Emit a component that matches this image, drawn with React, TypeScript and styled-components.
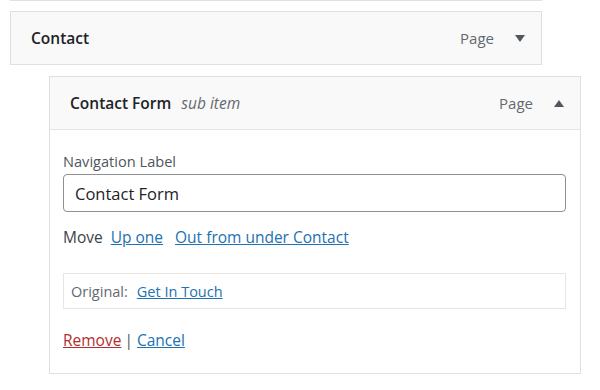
import styled, { createGlobalStyle } from "styled-components";

const GlobalStyle = createGlobalStyle`
	html, body {
		margin: 0;
		padding: 0;
		background: #ffffff;
	}
	body {
		font-family: "Open Sans", "Noto Sans", sans-serif;
		color: #1d2327;
		font-size: 15px;
	}
`;

type Caret = "up" | "down";

function Arrow({ dir }: { dir: Caret }) {
	return (
		<ArrowIcon viewBox="0 0 10 7" aria-hidden="true">
			{dir === "down" ? <path d="M0 0h10L5 7z" /> : <path d="M0 7h10L5 0z" />}
		</ArrowIcon>
	);
}

export default function App() {
	return (
		<>
			<GlobalStyle />
			<MenuList>
				<PrevEdge />
				<MenuItem $depth={0}>
					<ItemBar>
						<ItemTitle>Contact</ItemTitle>
						<ItemControls>
							<ItemType>Page</ItemType>
							<Arrow dir="down" />
						</ItemControls>
					</ItemBar>
				</MenuItem>
				<MenuItem $depth={1}>
					<ItemBar $open>
						<ItemTitle>
							Contact Form <SubItem>sub item</SubItem>
						</ItemTitle>
						<ItemControls>
							<ItemType>Page</ItemType>
							<Arrow dir="up" />
						</ItemControls>
					</ItemBar>
					<Settings>
						<FieldLabel htmlFor="nav-label">Navigation Label</FieldLabel>
						<TextInput id="nav-label" defaultValue="Contact Form" />
						<MoveRow>
							Move
							<Link href="#" $gap={8}>
								Up one
							</Link>
							<Link href="#" $gap={12}>
								Out from under Contact
							</Link>
						</MoveRow>
						<OriginalBox>
							Original:
							<Link href="#" $gap={9}>
								Get In Touch
							</Link>
						</OriginalBox>
						<Actions>
							<Link href="#" $danger>
								Remove
							</Link>
							<Sep>|</Sep>
							<Link href="#">Cancel</Link>
						</Actions>
					</Settings>
				</MenuItem>
			</MenuList>
		</>
	);
}

const MenuList = styled.div`
	display: flex;
	flex-direction: column;
	padding-left: 10px;
	width: 571px;
`;

const PrevEdge = styled.div`
	width: 532px;
	height: 1px;
	box-sizing: border-box;
	background: #f6f7f7;
	border: 1px solid #e0e0e0;
	border-top: none;
	margin-bottom: 10px;
`;

const MenuItem = styled.div<{ $depth: number }>`
	width: 532px;
	box-sizing: border-box;
	margin-left: ${(p) => p.$depth * 39}px;
	margin-bottom: 11px;
	border: 1px solid #e0e0e0;
	background: #ffffff;
`;

const ItemBar = styled.div<{ $open?: boolean }>`
	display: flex;
	align-items: center;
	justify-content: space-between;
	height: 52px;
	padding: 0 16px 0 20px;
	background: #f9f9f9;
	border-bottom: ${(p) => (p.$open ? "1px solid #e6e6e6" : "none")};
`;

const ItemTitle = styled.span`
	font-weight: 600;
	font-size: 15.5px;
	color: #1d2327;
`;

const SubItem = styled.span`
	font-weight: 400;
	font-style: italic;
	font-size: 15.5px;
	color: #646970;
	margin-left: 6px;
`;

const ItemControls = styled.div`
	display: flex;
	align-items: center;
	gap: 21px;
`;

const ItemType = styled.span`
	color: #646970;
	font-size: 15px;
`;

const ArrowIcon = styled.svg`
	width: 10px;
	height: 7px;
	fill: #50575e;
`;

const Settings = styled.div`
	display: flex;
	flex-direction: column;
	padding: 20px 14px 22px 13px;
`;

const FieldLabel = styled.label`
	color: #50575e;
	font-size: 14.6px;
	line-height: 22px;
	margin-bottom: 2px;
`;

const TextInput = styled.input`
	box-sizing: border-box;
	height: 38px;
	width: 100%;
	padding: 0 11px;
	border: 1px solid #8c8f94;
	border-radius: 4px;
	font-family: inherit;
	font-size: 16.5px;
	color: #1d2327;
	outline: none;
`;

const MoveRow = styled.div`
	display: flex;
	align-items: baseline;
	margin-top: 14px;
	line-height: 22px;
	color: #3c434a;
	font-size: 15.5px;
`;

const Link = styled.a<{ $danger?: boolean; $gap?: number }>`
	color: ${(p) => (p.$danger ? "#b32d2e" : "#2271b1")};
	text-decoration: underline;
	margin-left: ${(p) => p.$gap ?? 0}px;
`;

const OriginalBox = styled.div`
	margin-top: 25px;
	height: 36px;
	box-sizing: border-box;
	display: flex;
	align-items: center;
	padding: 0 7px;
	border: 1px solid #e6e6e6;
	color: #646970;
	font-size: 14.5px;
`;

const Actions = styled.div`
	margin-top: 20px;
	line-height: 22px;
	font-size: 15.5px;
	color: #3c434a;
	display: flex;
	align-items: center;
`;

const Sep = styled.span`
	margin: 0 4px 0 3px;
	color: #50575e;
`;
